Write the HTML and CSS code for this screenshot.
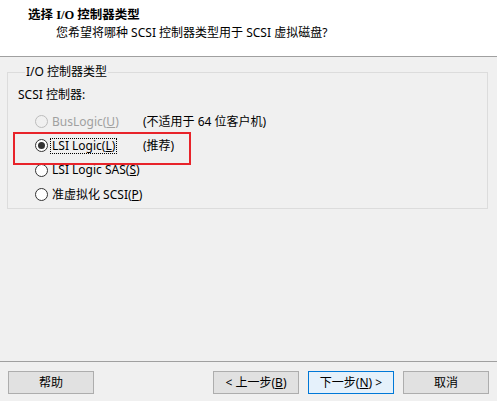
FILE: index.html
```html
<!DOCTYPE html>
<html lang="zh-CN">
<head>
<meta charset="utf-8">
<link rel="stylesheet" href="styles.css">
</head>
<body>
<div class="page">
  <header class="head">
    <div class="title">选择 I/O 控制器类型</div>
    <div class="subtitle">您希望将哪种 SCSI 控制器类型用于 SCSI 虚拟磁盘?</div>
  </header>
  <main class="main">
    <fieldset class="group">
      <legend class="legend">I/O 控制器类型</legend>
      <div class="label">SCSI 控制器:</div>
      <div class="options">
        <div class="opt disabled"><span class="radio"></span><span class="txt">BusLogic(<u>U</u>)</span></div>
        <div class="note">(不适用于 64 位客户机)</div>
        <div class="opt"><span class="radio checked"></span><span class="txt focus">LSI Logic(<u>L</u>)</span></div>
        <div class="note">(推荐)</div>
        <div class="opt wide"><span class="radio"></span><span class="txt">LSI Logic SAS(<u>S</u>)</span></div>
        <div class="opt wide"><span class="radio"></span><span class="txt">准虚拟化 SCSI(<u>P</u>)</span></div>
        <div class="highlight"></div>
      </div>
    </fieldset>
  </main>
  <footer class="foot">
    <button class="btn">帮助</button>
    <div class="spacer"></div>
    <button class="btn">&lt; 上一步(<u>B</u>)</button>
    <button class="btn default">下一步(<u>N</u>) &gt;</button>
    <button class="btn">取消</button>
  </footer>
</div>
</body>
</html>
```
FILE: styles.css
```css
* { box-sizing: border-box; }
html, body { margin: 0; padding: 0; }
body {
  background: #f0f0f0;
  font-family: "Noto Sans", "Noto Sans CJK SC", sans-serif;
  font-size: 12px;
  color: #000;
}
.page {
  width: 497px;
  height: 401px;
  display: flex;
  flex-direction: column;
}
.head {
  height: 57px;
  background: #fff;
  border-bottom: 1px solid #a0a0a0;
  padding-top: 7px;
}
.title {
  padding-left: 28px;
  line-height: 16px;
  font-weight: bold;
  font-family: "Liberation Serif", "Noto Sans CJK SC", serif;
  font-size: 12.5px;
}
.subtitle {
  padding-left: 56px;
  margin-top: 2px;
  line-height: 16px;
}
.main {
  flex: 1;
}
.group {
  margin: 7px 9px 0 7px;
  padding: 0 0 5px 10px;
  border: 1px solid #dcdcdc;
  min-width: 0;
}
.legend {
  margin-left: 7px;
  padding: 0 1px;
  line-height: 16px;
}
.label {
  margin-top: 7px;
  line-height: 16px;
}
.options {
  position: relative;
  margin-top: 10.5px;
  padding-left: 17px;
  display: grid;
  grid-template-columns: 108px 1fr;
  grid-auto-rows: 16px;
  row-gap: 8.4px;
}
.opt {
  display: flex;
  align-items: center;
  height: 16px;
  white-space: nowrap;
}
.opt.wide { grid-column: span 2; }
.note {
  line-height: 16px;
  white-space: nowrap;
}
.radio {
  width: 13px;
  height: 13px;
  border-radius: 50%;
  border: 1px solid #333;
  background: #fff;
  flex: none;
  display: flex;
  align-items: center;
  justify-content: center;
}
.radio.checked::after {
  content: "";
  width: 7px;
  height: 7px;
  border-radius: 50%;
  background: #333;
}
.disabled .radio {
  border-color: #bcbcbc;
  background: #f0f0f0;
}
.disabled .txt { color: #a0a0a0; }
.txt {
  margin-left: 3px;
  line-height: 14px;
  padding: 0 1px;
}
.focus {
  outline: 1px dotted #000;
}
.highlight {
  position: absolute;
  left: -5px;
  top: 18.5px;
  width: 178px;
  height: 33px;
  border: 2px solid #e8232a;
}
.foot {
  height: 40px;
  border-top: 1px solid #a0a0a0;
  padding: 9px 8px 0 8px;
  display: flex;
  align-items: flex-start;
  gap: 9px;
}
.spacer { flex: 1; }
.btn {
  width: 86px;
  height: 23px;
  border: 1px solid #adadad;
  background: #e1e1e1;
  font-family: "Noto Sans", "Noto Sans CJK SC", sans-serif;
  font-size: 12px;
  color: #000;
  padding: 0;
  line-height: 20px;
}
.btn.default {
  border-color: #0078d7;
  background: #e5f1fb;
}
```
